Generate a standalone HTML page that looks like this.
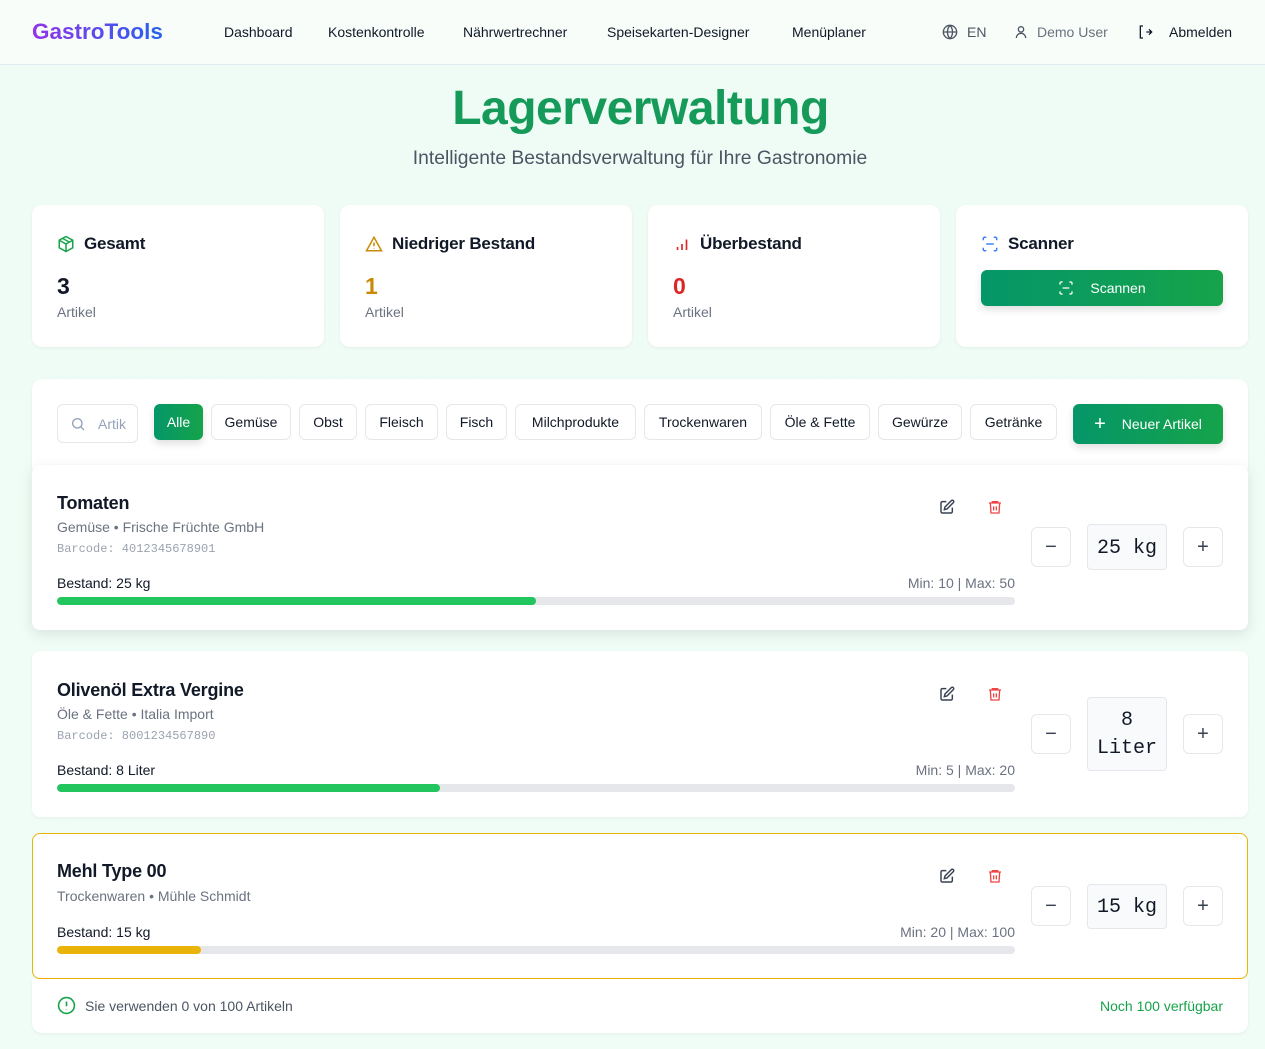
<!DOCTYPE html>
<html><head><meta charset="utf-8"><style>
*{box-sizing:border-box;margin:0;padding:0}
body{width:1265px;height:1049px;overflow:hidden;font-family:"Liberation Sans",sans-serif;background:linear-gradient(180deg,#effcf5,#f0fdf6);color:#111827;position:relative}
.abs{position:absolute}
header{position:absolute;left:0;top:0;width:1265px;height:65px;background:#f8fdfa;border-bottom:1px solid #e2e8f0}
.logo{left:32px;top:19px;font-size:22.5px;font-weight:bold;background:linear-gradient(90deg,#9333ea,#2563eb);-webkit-background-clip:text;color:transparent}
.nav{top:24px;font-size:14px;color:#111827}
.card{position:absolute;background:#fff;border-radius:10px;box-shadow:0 1px 3px rgba(0,0,0,.06)}
.ct{position:absolute;left:25px;top:29px;font-size:17px;font-weight:bold;display:flex;align-items:center;gap:9px;letter-spacing:-.2px}
.num{position:absolute;left:25px;top:68px;font-size:23px;font-weight:bold}
.sub{position:absolute;left:25px;top:99px;font-size:14px;color:#6b7280}
.chip{position:absolute;top:404px;height:36px;border:1px solid #e5e7eb;border-radius:6px;background:#fff;font-size:14px;display:flex;align-items:center;justify-content:center}
.green{background:linear-gradient(90deg,#059669,#16a34a);color:#fff;border:none}
.item{position:absolute;left:32px;width:1216px;background:#fff;border-radius:8px}
.nm{position:absolute;left:25px;font-size:18px;font-weight:bold;letter-spacing:-.2px}
.meta{position:absolute;left:25px;font-size:14px;color:#6b7280}
.bc{position:absolute;left:25px;font-family:"Liberation Mono",monospace;font-size:12px;color:#9ca3af}
.bl{position:absolute;left:25px;font-size:14px}
.mm{position:absolute;right:233px;font-size:14px;color:#6b7280}
.bar{position:absolute;left:25px;width:958px;height:8px;border-radius:4px;background:#e5e7eb;overflow:hidden}
.bar i{display:block;height:8px;border-radius:4px}
.btn{position:absolute;width:40px;height:40px;border:1px solid #e5e7eb;border-radius:6px;font-size:20px;display:flex;align-items:center;justify-content:center;color:#374151;left:999px}
.qty{position:absolute;left:1055px;width:80px;border:1px solid #e5e7eb;border-radius:4px;background:#f9fafb;font-family:"Liberation Mono",monospace;font-size:20px;text-align:center;display:flex;align-items:center;justify-content:center;padding-top:2px}
.ic{position:absolute}
</style></head><body>
<header>
<div class="abs logo">GastroTools</div>
<div class="abs nav" style="left:224px">Dashboard</div>
<div class="abs nav" style="left:328px">Kostenkontrolle</div>
<div class="abs nav" style="left:463px">Nährwertrechner</div>
<div class="abs nav" style="left:607px">Speisekarten-Designer</div>
<div class="abs nav" style="left:792px">Menüplaner</div>
<svg class="abs" style="left:942px;top:24px" width="16" height="16" viewBox="0 0 24 24" fill="none" stroke="#4b5563" stroke-width="2"><circle cx="12" cy="12" r="10"/><path d="M2 12h20M12 2a15 15 0 010 20M12 2a15 15 0 000 20"/></svg>
<div class="abs nav" style="left:967px;color:#4b5563">EN</div>
<svg class="abs" style="left:1013px;top:24px" width="16" height="16" viewBox="0 0 24 24" fill="none" stroke="#4b5563" stroke-width="2"><circle cx="12" cy="8" r="4"/><path d="M5 21a7 7 0 0114 0"/></svg>
<div class="abs nav" style="left:1037px;color:#6b7280">Demo User</div>
<svg class="abs" style="left:1137px;top:24px" width="16" height="16" viewBox="0 0 24 24" fill="none" stroke="#111827" stroke-width="2"><path d="M9 3H5v18h4M14 12h8M18 8l4 4-4 4"/></svg>
<div class="abs nav" style="left:1169px">Abmelden</div>
</header>
<div class="abs" style="left:8px;width:1265px;top:81px;text-align:center;font-size:48px;font-weight:bold;color:#159a5a;letter-spacing:-.5px">Lagerverwaltung</div>
<div class="abs" style="left:0;width:1280px;top:148px;text-align:center;font-size:19.3px;color:#4b5563">Intelligente Bestandsverwaltung für Ihre Gastronomie</div>

<div class="card" style="left:32px;top:205px;width:292px;height:142px">
<div class="ct"><svg width="18" height="18" viewBox="0 0 24 24" fill="none" stroke="#16a34a" stroke-width="2"><path d="M12 2l9 5v10l-9 5-9-5V7z"/><path d="M3 7l9 5 9-5M12 12v10M7.5 4.5l9 5"/></svg>Gesamt</div>
<div class="num">3</div><div class="sub">Artikel</div></div>
<div class="card" style="left:340px;top:205px;width:292px;height:142px">
<div class="ct"><svg width="18" height="18" viewBox="0 0 24 24" fill="none" stroke="#ca8a04" stroke-width="2"><path d="M12 3l10 18H2z"/><path d="M12 10v5M12 18v.5"/></svg>Niedriger Bestand</div>
<div class="num" style="color:#ca8a04">1</div><div class="sub">Artikel</div></div>
<div class="card" style="left:648px;top:205px;width:292px;height:142px">
<div class="ct"><svg width="18" height="18" viewBox="0 0 24 24" fill="none" stroke="#dc2626" stroke-width="2.2"><path d="M6 20v-4M12 20v-8M18 20V6"/></svg>Überbestand</div>
<div class="num" style="color:#dc2626">0</div><div class="sub">Artikel</div></div>
<div class="card" style="left:956px;top:205px;width:292px;height:142px">
<div class="ct"><svg width="18" height="18" viewBox="0 0 24 24" fill="none" stroke="#3b82f6" stroke-width="2"><path d="M3 7V5a2 2 0 012-2h2M17 3h2a2 2 0 012 2v2M21 17v2a2 2 0 01-2 2h-2M7 21H5a2 2 0 01-2-2v-2M7 12h10"/></svg>Scanner</div>
<div class="abs green" style="left:25px;top:65px;width:242px;height:36px;border-radius:6px;display:flex;align-items:center;justify-content:center;gap:16px;font-size:14px;box-shadow:0 4px 8px rgba(0,0,0,.12)"><svg width="16" height="16" viewBox="0 0 24 24" fill="none" stroke="#fff" stroke-width="2"><path d="M3 7V5a2 2 0 012-2h2M17 3h2a2 2 0 012 2v2M21 17v2a2 2 0 01-2 2h-2M7 21H5a2 2 0 01-2-2v-2M7 12h10"/></svg>Scannen</div></div>

<div class="card" style="left:32px;top:379px;width:1216px;height:90px;border-radius:10px 10px 0 0"></div>
<div class="chip" style="left:57px;width:81px;height:39px;justify-content:flex-start;padding-left:12px;gap:12px;color:#94a3b8"><svg width="16" height="16" viewBox="0 0 24 24" fill="none" stroke="#94a3b8" stroke-width="2"><circle cx="11" cy="11" r="7"/><path d="M16 16l5 5"/></svg>Artik</div>
<div class="chip green" style="left:154px;width:49px;box-shadow:0 4px 8px rgba(0,0,0,.12)">Alle</div>
<div class="chip" style="left:211px;width:80px">Gemüse</div>
<div class="chip" style="left:299px;width:58px">Obst</div>
<div class="chip" style="left:365px;width:73px">Fleisch</div>
<div class="chip" style="left:446px;width:61px">Fisch</div>
<div class="chip" style="left:515px;width:121px">Milchprodukte</div>
<div class="chip" style="left:644px;width:118px">Trockenwaren</div>
<div class="chip" style="left:770px;width:100px">Öle &amp; Fette</div>
<div class="chip" style="left:878px;width:84px">Gewürze</div>
<div class="chip" style="left:970px;width:87px">Getränke</div>
<div class="chip green" style="left:1073px;width:150px;height:40px;gap:16px;box-shadow:0 4px 8px rgba(0,0,0,.12)"><span style="font-size:20px">+</span>Neuer Artikel</div>

<div class="item" style="top:465px;height:165px;box-shadow:0 4px 14px rgba(0,0,0,.1)">
<div class="nm" style="top:28px">Tomaten</div>
<div class="meta" style="top:54px">Gemüse • Frische Früchte GmbH</div>
<div class="bc" style="top:77px">Barcode: 4012345678901</div>
<div class="bl" style="top:110px">Bestand: 25 kg</div>
<div class="mm" style="top:110px">Min: 10 | Max: 50</div>
<div class="bar" style="top:132px"><i style="width:479px;background:#22c55e"></i></div>
</div>
<div class="item" style="top:651px;height:166px;box-shadow:0 1px 3px rgba(0,0,0,.05)">
<div class="nm" style="top:29px">Olivenöl Extra Vergine</div>
<div class="meta" style="top:55px">Öle &amp; Fette • Italia Import</div>
<div class="bc" style="top:78px">Barcode: 8001234567890</div>
<div class="bl" style="top:111px">Bestand: 8 Liter</div>
<div class="mm" style="top:111px">Min: 5 | Max: 20</div>
<div class="bar" style="top:133px"><i style="width:383px;background:#22c55e"></i></div>
</div>
<div class="item" style="top:833px;height:146px;border:1px solid #eab308">
<div class="nm" style="top:27px;left:24px">Mehl Type 00</div>
<div class="meta" style="top:54px;left:24px">Trockenwaren • Mühle Schmidt</div>
<div class="bl" style="top:90px;left:24px">Bestand: 15 kg</div>
<div class="mm" style="top:90px;right:232px">Min: 20 | Max: 100</div>
<div class="bar" style="top:112px;left:24px"><i style="width:144px;background:#eab308"></i></div>
</div>

<svg class="ic" style="left:939px;top:499px" width="16" height="16" viewBox="0 0 24 24" fill="none" stroke="#374151" stroke-width="2.2"><path d="M11 4H5a2 2 0 00-2 2v13a2 2 0 002 2h13a2 2 0 002-2v-6"/><path d="M18.5 2.5a2.1 2.1 0 013 3L12 15l-4 1 1-4z"/></svg>
<svg class="ic" style="left:987px;top:499px" width="16" height="16" viewBox="0 0 24 24" fill="none" stroke="#ef4444" stroke-width="2"><path d="M3 6h18M8 6V4h8v2M19 6l-1 15H6L5 6M10 11v6M14 11v6"/></svg>
<svg class="ic" style="left:939px;top:686px" width="16" height="16" viewBox="0 0 24 24" fill="none" stroke="#374151" stroke-width="2.2"><path d="M11 4H5a2 2 0 00-2 2v13a2 2 0 002 2h13a2 2 0 002-2v-6"/><path d="M18.5 2.5a2.1 2.1 0 013 3L12 15l-4 1 1-4z"/></svg>
<svg class="ic" style="left:987px;top:686px" width="16" height="16" viewBox="0 0 24 24" fill="none" stroke="#ef4444" stroke-width="2"><path d="M3 6h18M8 6V4h8v2M19 6l-1 15H6L5 6M10 11v6M14 11v6"/></svg>
<svg class="ic" style="left:939px;top:868px" width="16" height="16" viewBox="0 0 24 24" fill="none" stroke="#374151" stroke-width="2.2"><path d="M11 4H5a2 2 0 00-2 2v13a2 2 0 002 2h13a2 2 0 002-2v-6"/><path d="M18.5 2.5a2.1 2.1 0 013 3L12 15l-4 1 1-4z"/></svg>
<svg class="ic" style="left:987px;top:868px" width="16" height="16" viewBox="0 0 24 24" fill="none" stroke="#ef4444" stroke-width="2"><path d="M3 6h18M8 6V4h8v2M19 6l-1 15H6L5 6M10 11v6M14 11v6"/></svg>

<div class="btn" style="left:1031px;top:527px">−</div>
<div class="qty" style="left:1087px;top:524px;height:46px">25 kg</div>
<div class="btn" style="left:1183px;top:527px">+</div>
<div class="btn" style="left:1031px;top:714px">−</div>
<div class="qty" style="left:1087px;top:697px;height:74px;line-height:28px">8<br>Liter</div>
<div class="btn" style="left:1183px;top:714px">+</div>
<div class="btn" style="left:1031px;top:886px">−</div>
<div class="qty" style="left:1087px;top:884px;height:45px">15 kg</div>
<div class="btn" style="left:1183px;top:886px">+</div>

<div class="card" style="left:32px;top:979px;width:1216px;height:54px;border-radius:0 0 10px 10px">
<svg class="abs" style="left:25px;top:17px" width="19" height="19" viewBox="0 0 24 24" fill="none" stroke="#16a34a" stroke-width="2"><circle cx="12" cy="12" r="10"/><path d="M12 7v6M12 16.5v.5"/></svg>
<div class="abs" style="left:53px;top:19px;font-size:14px;color:#4b5563">Sie verwenden 0 von 100 Artikeln</div>
<div class="abs" style="right:25px;top:19px;font-size:14px;color:#16a34a">Noch 100 verfügbar</div>
</div>
</body></html>
